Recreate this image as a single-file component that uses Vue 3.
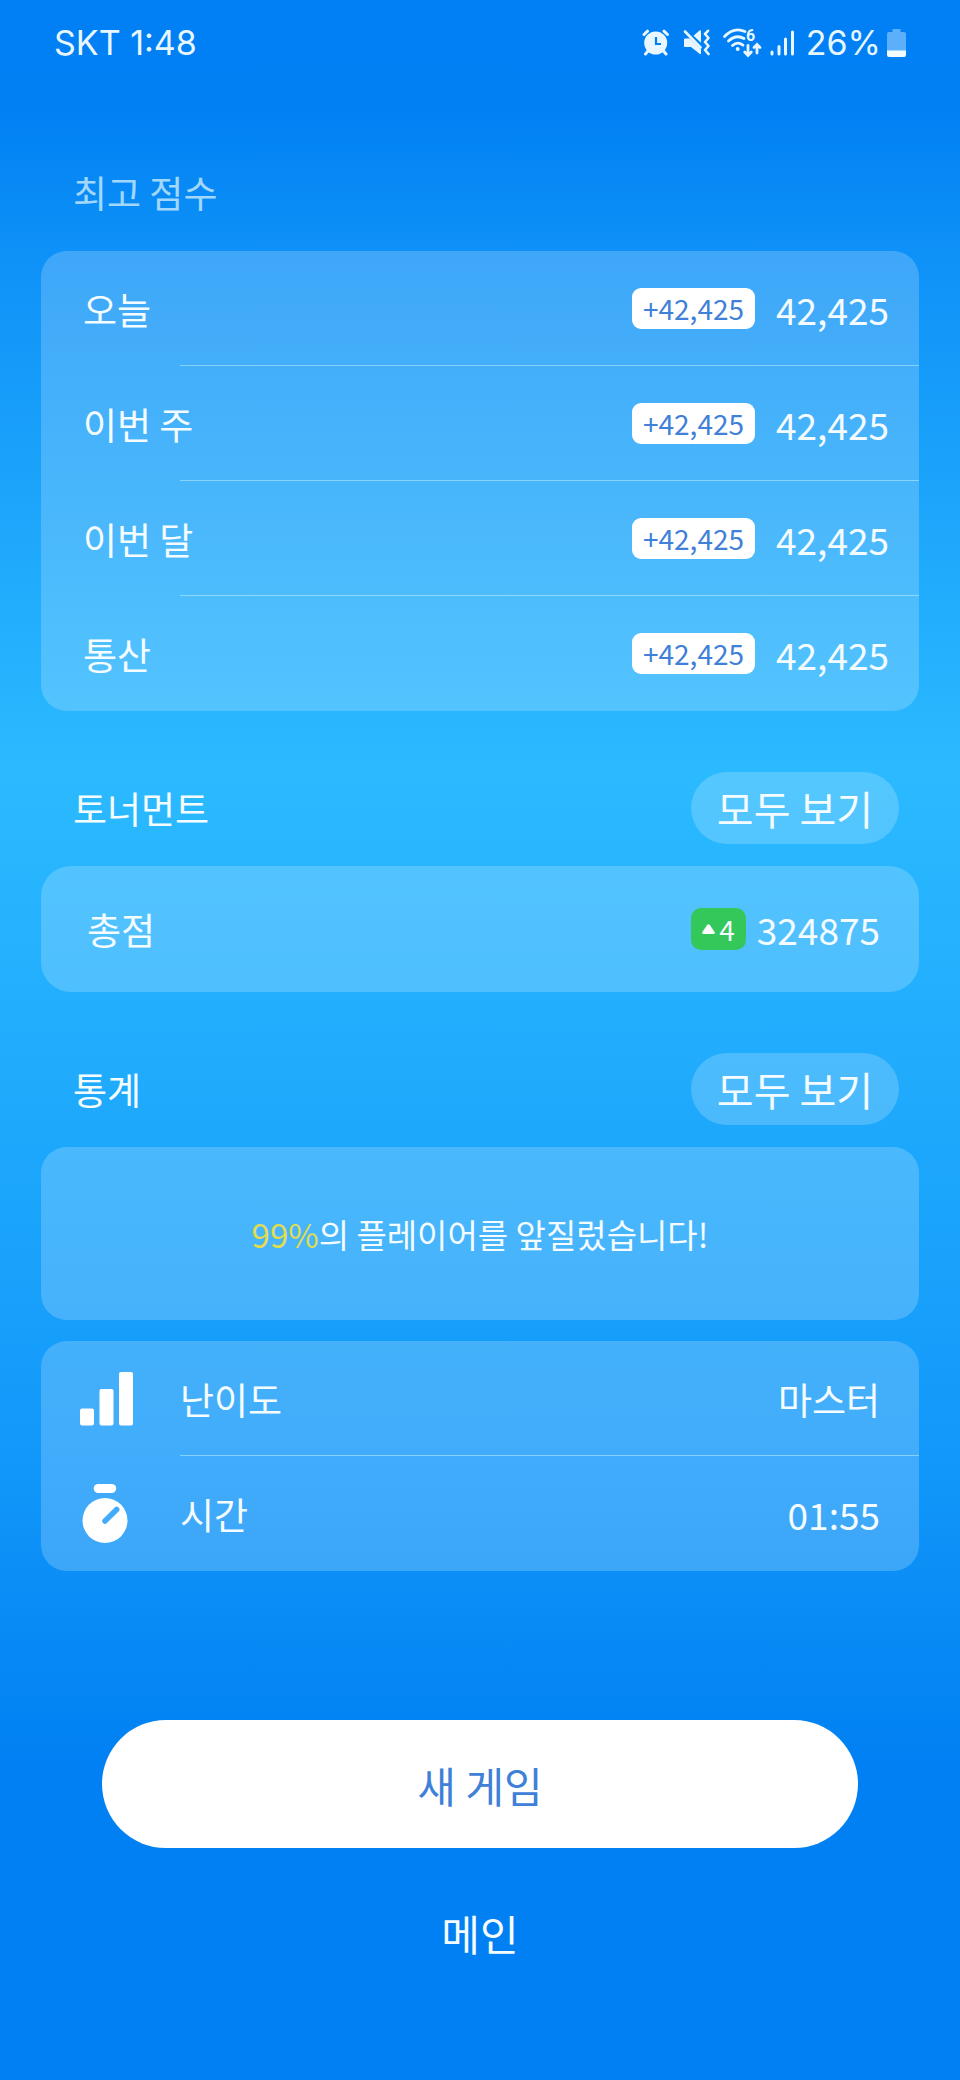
<script setup>
const scores = [
  { label: '오늘', gain: '+42,425', value: '42,425' },
  { label: '이번 주', gain: '+42,425', value: '42,425' },
  { label: '이번 달', gain: '+42,425', value: '42,425' },
  { label: '통산', gain: '+42,425', value: '42,425' },
]
</script>

<template>
  <div class="screen">
    <header class="status">
      <span>SKT 1:48</span>
      <div class="status-icons">
        <svg class="alarm" width="28" height="28" viewBox="0 0 28 28" aria-hidden="true">
          <g fill="none" stroke="#e8f7ff" stroke-width="3" stroke-linecap="round">
            <path d="M2 5.500 5.500 2.200M22 2.200 25.500 5.500M6 22 3.500 25M21.500 22 24 25" />
          </g>
          <circle cx="13.700" cy="14" r="11.500" fill="#e8f7ff" />
          <path d="M14 8v7h5" fill="none" stroke="#0080f2" stroke-width="2.200" />
        </svg>
        <svg class="mute" width="28" height="28" viewBox="0 0 28 28" aria-hidden="true">
          <g fill="#e8f7ff">
            <path d="M1 10.500Q1 9.500 2 9.500H7L18 20.500V24.500Q17.500 25.600 16.500 24.800L8 18H2Q1 18 1 17Z" />
            <path d="M10.500 6.700 16.500 1.500Q18 .6 18 2.200V13.800Z" />
          </g>
          <g fill="none" stroke="#e8f7ff" stroke-width="2.600" stroke-linecap="round" stroke-linejoin="round">
            <path d="M2 2.500 17.500 18.500" />
            <path d="M25 1.800 22 5 25.500 9 22 13 25.500 17 22 21 25.500 25" />
          </g>
        </svg>
        <svg class="wifi" width="39" height="46" viewBox="0 -8 39 46" aria-hidden="true">
          <g fill="none" stroke="#e8f7ff" stroke-width="2.800" stroke-linecap="round">
            <path d="M1.500 8.500Q11-1.500 22 3.500" />
            <path d="M5.500 13Q13 6 21 10.500" />
            <path d="M9.500 17.500Q14.500 13 20 17.200" />
            <path d="M25 17.500v9.500M21.700 24l3.300 3.500L28.300 24" />
            <path d="M34 25v-8M31 19.500l3-3 3 3" />
          </g>
          <circle cx="14.700" cy="21" r="2" fill="#e8f7ff" />
          <text x="23" y="13" class="wifi-gen">6</text>
        </svg>
        <svg class="signal" width="25" height="28" viewBox="0 0 25 28" aria-hidden="true">
          <g fill="none" stroke="#e8f7ff" stroke-width="3" stroke-linecap="round">
            <path d="M2 23v2M9 17.500V25M15.500 10V25M22.500 3V25" />
          </g>
        </svg>
        <span class="percent">26%</span>
        <svg class="battery" width="19" height="28" viewBox="0 0 19 28" aria-hidden="true">
          <path d="M5.500 0h8v3H17q2 0 2 2v17H0V5q0-2 2-2h3.500Z" fill="#5cb0fb" />
          <path d="M0 21.500h19V26q0 2-2 2H2q-2 0-2-2Z" fill="#f2fbff" />
        </svg>
      </div>
    </header>

    <main class="content">
      <section>
        <h2 class="title muted">최고 점수</h2>
        <dl class="card list">
          <div v-for="s in scores" :key="s.label" class="row">
            <dt>{{ s.label }}</dt>
            <dd><span class="gain">{{ s.gain }}</span><span>{{ s.value }}</span></dd>
          </div>
        </dl>
      </section>

      <section>
        <div class="heading">
          <h2 class="title">토너먼트</h2>
          <button type="button" class="pill">모두 보기</button>
        </div>
        <dl class="card total">
          <dt>총점</dt>
          <dd>
            <span class="rank">
              <svg width="13" height="10" viewBox="0 0 13 10" aria-hidden="true">
                <path d="M5.300.8Q6.500-.4 7.700.8L12.600 8Q13.300 10 11.500 10H1.500Q-.3 10 .4 8Z" fill="#fff" />
              </svg>4</span>
            <span>324875</span>
          </dd>
        </dl>
      </section>

      <section>
        <div class="heading">
          <h2 class="title">통계</h2>
          <button type="button" class="pill">모두 보기</button>
        </div>
        <p class="card message"><span><span class="accent">99%</span>의 플레이어를 앞질렀습니다!</span></p>
        <dl class="card list stats">
          <div class="row">
            <dt>
              <svg width="54" height="54" viewBox="0 0 54 54" aria-hidden="true">
                <g fill="#fff">
                  <rect x="0" y="36.500" width="14" height="17" rx="2" />
                  <rect x="19.500" y="17" width="14" height="36.500" rx="2" />
                  <rect x="39" y="0" width="14" height="53.500" rx="2" />
                </g>
              </svg>난이도</dt>
            <dd>마스터</dd>
          </div>
          <div class="row">
            <dt>
              <svg width="54" height="60" viewBox="0 0 54 60" aria-hidden="true">
                <rect x="13.700" y="0" width="22.500" height="9" rx="4.500" fill="#fff" />
                <circle cx="25" cy="36.500" r="22.500" fill="#fff" />
                <path d="M25 37 36.700 25.500" stroke="#43acfa" stroke-width="5.500" stroke-linecap="round" />
              </svg>시간</dt>
            <dd>01:55</dd>
          </div>
        </dl>
      </section>
    </main>

    <footer class="actions">
      <button type="button" class="primary">새 게임</button>
      <button type="button" class="plain">메인</button>
    </footer>
  </div>
</template>

<style>
body {
  margin: 0;
  background: #0080f2;
}
</style>

<style scoped>
.screen {
  box-sizing: border-box;
  min-height: 100vh;
  background: linear-gradient(180deg, #0080f4 0%, #0080f3 5%, #0f92f8 12.5%, #2bbaff 37%, #1298fa 70%, #0080f2 85%);
  color: #f4fcff;
  font: 37px/56px "Noto Sans CJK KR", sans-serif;
}
.status {
  display: flex;
  align-items: center;
  justify-content: space-between;
  height: 86px;
  padding: 0 54px;
  color: #e8f7ff;
  font: 34px/40px Inter, sans-serif;
}
.status-icons {
  display: flex;
  align-items: center;
}
.mute { margin-left: 13px; }
.wifi {
  margin-left: 12px;
  overflow: visible;
}
.signal { margin-left: 8px; }
.percent { margin: 0 6px 0 11px; }
.wifi-gen {
  fill: #e8f7ff;
  font: 700 16px Roboto, sans-serif;
}
.content {
  display: flex;
  flex-direction: column;
  gap: 61px;
  padding: 78px 41px 0;
}
.title {
  margin: 0;
  padding-left: 32px;
  font-size: 37px;
  font-weight: 400;
}
.muted {
  margin-bottom: 31px;
  color: rgba(214, 241, 255, 0.75);
}
.heading {
  display: flex;
  align-items: center;
  justify-content: space-between;
  margin-bottom: 22px;
  padding-right: 20px;
}
button {
  border: 0;
  margin: 0;
  font-family: inherit;
  cursor: pointer;
}
.pill {
  height: 72px;
  padding: 0 26px;
  border-radius: 36px;
  background: rgba(255, 255, 255, 0.2);
  color: #f4fcff;
  font-size: 40px;
  line-height: 56px;
}
.card {
  margin: 0;
  border-radius: 26px;
  background: rgba(255, 255, 255, 0.2);
}
.row {
  position: relative;
  display: flex;
  align-items: center;
  justify-content: space-between;
  height: 115px;
  padding: 0 30px 0 42px;
}
.row + .row::before {
  content: "";
  position: absolute;
  top: -1px;
  left: 139px;
  right: 0;
  height: 1px;
  background: rgba(200, 245, 255, 0.5);
}
dt, dd {
  display: flex;
  align-items: center;
  margin: 0;
}
.gain {
  display: block;
  margin-right: 21px;
  padding: 0 11px;
  border-radius: 9px;
  background: #fff;
  color: #3f80d8;
  font-size: 28px;
  line-height: 41px;
}
.total {
  display: flex;
  align-items: center;
  justify-content: space-between;
  height: 126px;
  padding: 0 39px 0 46px;
  border-radius: 30px;
}
.rank {
  display: flex;
  align-items: center;
  gap: 4px;
  margin-right: 11px;
  padding: 0 11px;
  border-radius: 10px;
  background: #34c759;
  font-size: 28px;
  line-height: 42px;
}
.message {
  display: flex;
  align-items: center;
  justify-content: center;
  min-height: 173px;
  margin-bottom: 21px;
  font-size: 33px;
}
.accent { color: #e2dc4e; }
.stats .row {
  padding: 0 39px;
}
.stats dt svg { margin-right: 46px; }
.actions {
  display: flex;
  flex-direction: column;
  gap: 48px;
  padding: 149px 102px 0;
}
.primary {
  height: 128px;
  border-radius: 64px;
  background: #fff;
  color: #3f80d8;
  font-size: 42px;
}
.plain {
  height: 72px;
  background: none;
  color: #f4fcff;
  font-size: 42px;
}
</style>
